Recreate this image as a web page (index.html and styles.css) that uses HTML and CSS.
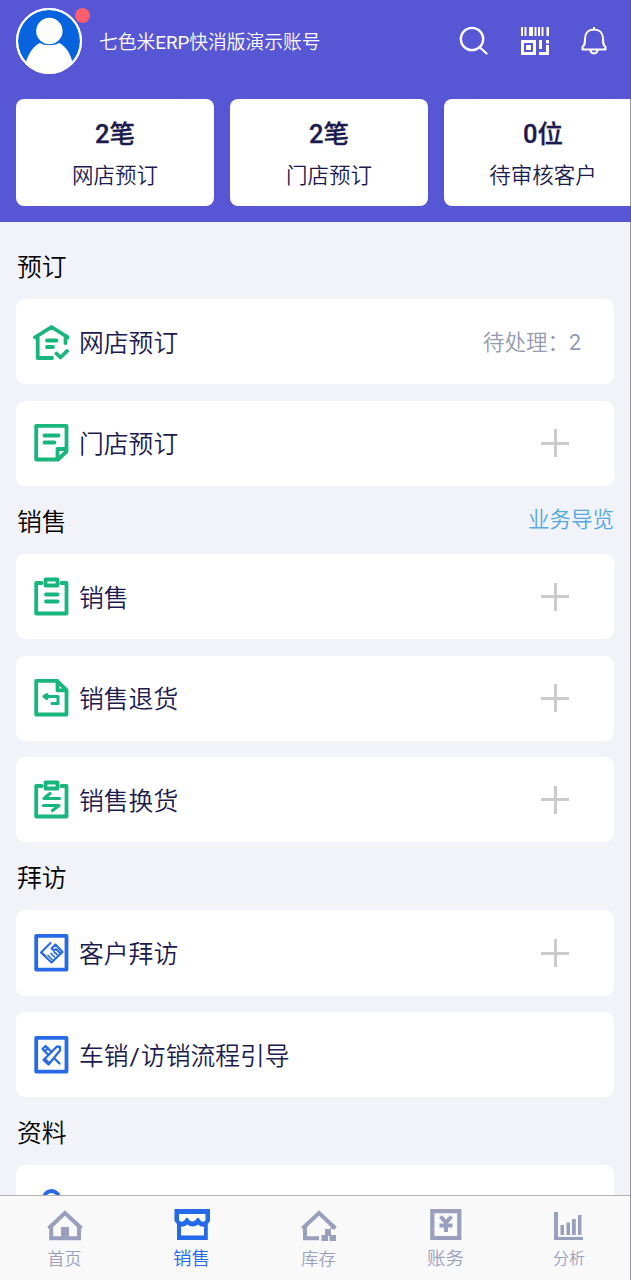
FILE: index.html
```html
<!DOCTYPE html>
<html lang="zh-CN">
<head>
<meta charset="utf-8">
<title>七色米ERP</title>
<link rel="stylesheet" href="styles.css">
</head>
<body>
<div class="app">
  <header class="header">
    <div class="topbar">
      <div class="avatar">
        <svg width="66" height="66" viewBox="0 0 66 66">
          <defs><clipPath id="face"><circle cx="33" cy="33" r="32"/></clipPath></defs>
          <circle cx="33" cy="33" r="33" fill="#fff"/>
          <circle cx="33" cy="33" r="31" fill="#0864de"/>
          <g clip-path="url(#face)" fill="#fff">
            <circle cx="33.4" cy="23" r="13.2"/>
            <path d="M9 57C12 46 17 38 24 35C29 38 38 38 43 35C50 38 55 46 57 57L50 67H16Z"/>
          </g>
          <circle cx="33" cy="33" r="32" fill="none" stroke="#fff" stroke-width="2"/>
        </svg>
        <span class="dot"></span>
      </div>
      <h1 class="account">七色米<span class="latin">ERP</span>快消版演示账号</h1>
      <div class="tools">
        <svg width="30" height="30" viewBox="0 0 30 30" fill="none" stroke="#fff" stroke-width="2.3" stroke-linecap="round"><circle cx="13" cy="13" r="11.2"/><path d="M21 21.5L27.5 27.5"/></svg>
        <svg width="30" height="30" viewBox="0 0 30 30" fill="#fff"><path d="M1 1h2v9H1zM4.500 1h2v9h-2zM9 1h4v9H9zM14.500 1h2v9h-2zM18 1h2v9h-2zM21.500 1h2v9h-2zM26.500 1h2.500v9h-2.500z"/><path fill-rule="evenodd" d="M1 14h15v15H1zM4 17v9h9v-9zM6 19h5v5H6z"/><path d="M19 14h3v9h-3zM26 14h3v3.500h-3zM26 19h3v10H19v-3h7z"/></svg>
        <svg width="30" height="30" viewBox="0 0 30 30" fill="none" stroke="#fff" stroke-width="2" stroke-linejoin="round"><path d="M3.500 23.500V21C6 19 6 17 6 12.500C6 7 9.500 3.500 15 3.500S24 7 24 12.500C24 17 24 19 26.500 21v2.500z"/><path d="M15 1v2.500M11.500 24c0 4.500 7 4.500 7 0"/></svg>
      </div>
    </div>
    <div class="stats">
      <div class="stat"><b>2笔</b><span>网店预订</span></div>
      <div class="stat"><b>2笔</b><span>门店预订</span></div>
      <div class="stat"><b>0位</b><span>待审核客户</span></div>
    </div>
  </header>

  <main class="content">
    <div class="heading"><h2>预订</h2></div>
    <div class="list">
      <div class="row">
        <svg class="icon green" viewBox="0 0 36 40"><path d="M2 15.300L18.500 5L35 15.300M4.700 15V36H19M32.500 15V21M14 18.500H23.500M14 25H20M23.500 31.500L27.500 35.500L34 29"/></svg>
        <span class="name">网店预订</span><span class="pending">待处理：<span class="latin">2</span></span>
      </div>
      <div class="row">
        <svg class="icon green" viewBox="0 0 36 40"><path d="M33.500 26V2.800H3.200V36.500H25L33.500 28.500V26H24.500V36M11.500 12.500H25.500M11.500 19.500H21.500"/></svg>
        <span class="name">门店预订</span><i class="plus"></i>
      </div>
    </div>
    <div class="heading"><h2>销售</h2><a class="guide">业务导览</a></div>
    <div class="list">
      <div class="row">
        <svg class="icon green" viewBox="0 0 36 40"><path d="M8.500 6H3.200V36.500H33.500V6H28.500M12.500 2.500H24.500V8.500H12.500ZM13 17.500H24.500M13 24.500H24.500"/></svg>
        <span class="name">销售</span><i class="plus"></i>
      </div>
      <div class="row">
        <svg class="icon green" viewBox="0 0 36 40"><path d="M24 2.800H3.200V36.500H33.500V12L24 2.800ZM24.500 3V12.300H33"/><path d="M13 18.500H25V25.500H19M14 16.500L11 18.500L14 20.500Z" stroke-width="3"/></svg>
        <span class="name">销售退货</span><i class="plus"></i>
      </div>
      <div class="row">
        <svg class="icon green" viewBox="0 0 36 40"><path d="M8.500 6H3.200V36.500H33.500V6H28.500M12.500 2.500H24.500V8.500H12.500Z"/><path d="M17 13.500L11 18.500H26.500M10.500 25.500H26L19.500 30.500" stroke-width="3.200"/></svg>
        <span class="name">销售换货</span><i class="plus"></i>
      </div>
    </div>
    <div class="heading"><h2>拜访</h2></div>
    <div class="list">
      <div class="row">
        <svg class="icon blue" viewBox="0 0 36 40"><rect x="3.200" y="2.800" width="30.300" height="33.800"/><g stroke-width="2.100"><path d="M17.500 10L8 19.500L18.500 29.500L29.500 19L22.500 11.500L18.500 15.500L21 17.500L23 16L27 20"/><path d="M9 20L12.500 23M15 22.500L19 26.500M18 20.500L21.500 24M21 19L24 21.500" stroke-width="1.700"/></g></svg>
        <span class="name">客户拜访</span><i class="plus"></i>
      </div>
      <div class="row">
        <svg class="icon blue" viewBox="0 0 36 40"><rect x="3.200" y="2.800" width="30.300" height="33.800"/><g stroke-width="2.300"><path d="M24 11.500L10.500 25L15.500 29.500L27 15.500V12ZM12 24L16.500 28.500M18 16.500L12.500 11L9.500 14L15 19.500M12 16L15 13M22 24L26.500 28.500"/></g></svg>
        <span class="name">车销<span class="slash">/</span>访销流程引导</span>
      </div>
    </div>
    <div class="heading"><h2>资料</h2></div>
    <div class="list">
      <div class="row">
        <svg class="icon blue" viewBox="0 0 36 40"><circle cx="18.500" cy="10.500" r="7.500"/><path d="M4 36C4 26 10 22 18 22S33 26 33 36Z"/></svg>
      </div>
    </div>
  </main>

  <nav class="tabs">
    <a class="tab">
      <svg viewBox="0 0 40 36" fill="none" stroke="currentColor" stroke-width="4"><path d="M3.500 22.500L20 7L36.500 22.500M6.200 20V32.200H34V20"/><path d="M16 21h8v11h-8z" fill="currentColor" stroke="none"/></svg>
      <span>首页</span>
    </a>
    <a class="tab active">
      <svg viewBox="0 0 40 36" fill="currentColor"><path fill-rule="evenodd" d="M2.500 3H38V15L35.800 18V34H5V18L2.500 15ZM7 8V14C8 16.500 12 16.500 14 12H16C17.500 16.500 23 16.500 25 12H27C28.500 16.500 32.500 16.500 33.500 14V8ZM9 20.500V29.500H32V20.500C29.500 21 27.500 20 26 18.500C23.500 21 18 21 15.500 18.500C13.500 20 11.500 21 9 20.500Z"/></svg>
      <span class="t-sales">销售</span>
    </a>
    <a class="tab">
      <svg viewBox="0 0 40 36" fill="none" stroke="currentColor" stroke-width="4"><path d="M3.500 22.500L20 7L36.500 22.500M6 20V32.200H20M33.500 18V23"/><path d="M26 23h6v6h5v6h-6.500v-5h-1.500v5h-6.500v-6H26z" fill="currentColor" stroke="none"/></svg>
      <span class="t-stock">库存</span>
    </a>
    <a class="tab">
      <svg viewBox="0 0 40 36" fill="none" stroke="currentColor" stroke-width="4"><path d="M6.300 5.200H33.300V32H6.300Z" stroke-width="4.200"/><path d="M14.500 10.500L20 16.500L25.500 10.500M13.500 19.500H26.500M20 16V26" stroke-width="4"/></svg>
      <span class="t-money">账务</span>
    </a>
    <a class="tab">
      <svg viewBox="0 0 40 36" fill="currentColor"><path d="M5 6h4v25h25v3H5zM11.500 19h3.500v10h-3.500zM17.500 16.500h3.500V29h-3.500zM23 13h3.800v16H23zM29 9h3.500v20H29z"/></svg>
      <span class="t-stats">分析</span>
    </a>
  </nav>
  <div class="edge"></div>
</div>
</body>
</html>
```
FILE: styles.css
```css
* { box-sizing: border-box; }

body {
  margin: 0;
  font-family: Roboto, "Noto Sans CJK SC", sans-serif;
  font-weight: 350;
  color: #1c1b50;
}

.app {
  position: relative;
  display: flex;
  flex-direction: column;
  height: 1280px;
  overflow: hidden;
  background: #f2f3f8;
}

svg { display: block; flex: none; }

.header {
  flex: none;
  height: 222.300px;
  padding: 8px 0 0 16px;
  background: #5756d5;
  overflow: hidden;
}

.topbar { display: flex; align-items: center; height: 66px; }
.avatar { position: relative; }

.dot {
  position: absolute;
  top: 0;
  right: -8px;
  width: 15px;
  height: 15px;
  border-radius: 50%;
  background: #fb5f6d;
}

.account {
  margin: 0 0 1px 17px;
  font-size: 18.750px;
  font-weight: 350;
  white-space: nowrap;
  color: #fff;
}

.latin { font-weight: 400; }
.slash { padding: 0 1px; font-weight: 400; }

.tools { display: flex; gap: 30px; margin: 0 22px 0 auto; }
.tools svg:nth-child(2) { margin-right: -1px; margin-left: 1px; }

.stats { display: flex; gap: 16px; margin-top: 25px; }

.stat {
  display: flex;
  flex: none;
  flex-direction: column;
  align-items: center;
  width: 198px;
  height: 107px;
  padding-top: 16px;
  border-radius: 8px;
  background: #fff;
}

.stat b { font-size: 25.500px; font-weight: 500; line-height: 38px; -webkit-text-stroke: 0.300px currentColor; }
.stat span { font-size: 21.500px; line-height: 32px; margin-top: 7px; }

.content {
  flex: 1;
  min-height: 0;
  overflow: hidden;
  padding: 9px 17px 0 16px;
}

.heading {
  display: flex;
  align-items: center;
  justify-content: space-between;
  height: 68px;
}

.heading h2 { margin: 0 0 1px 1px; font-size: 24.800px; font-weight: 350; color: #000; }
.guide { margin-bottom: 5px; font-size: 21.500px; color: #53a8e2; }

.list { display: flex; flex-direction: column; gap: 16.400px; }

.row {
  display: flex;
  align-items: center;
  height: 85.200px;
  padding: 0 33px 0 17px;
  border-radius: 9px;
  background: #fff;
}

.icon {
  width: 36px;
  height: 40px;
  fill: none;
  stroke-width: 3.800;
  stroke-linecap: round;
  stroke-linejoin: round;
}

.green { stroke: #18b57d; }
.blue { stroke: #2869e6; }

.name { margin: 0 0 2px 10px; font-size: 24.800px; white-space: nowrap; }
.pending { margin: 0 0 2px auto; font-size: 21.500px; color: #9699af; }

.plus {
  width: 28px;
  height: 28px;
  margin: 0 12px 0 auto;
  background:
    linear-gradient(#cbcbcb, #cbcbcb) center / 28px 3px no-repeat,
    linear-gradient(#cbcbcb, #cbcbcb) center / 3px 28px no-repeat;
}

.tabs {
  flex: none;
  display: grid;
  grid-template-columns: 127px 127px 127px 127px 120px;
  height: 85px;
  padding-left: 1px;
  border-top: 1px solid #b3b3b9;
  background: #f9f9fa;
}

.tab {
  display: flex;
  flex-direction: column;
  align-items: center;
  padding-top: 10px;
  color: #9a9fbd;
}

.tab svg { width: 40px; height: 36px; }
.tab span { font-size: 17px; line-height: 24px; margin-top: 5px; }
.tab .t-sales { font-size: 18.500px; }
.tab .t-stock { font-size: 17.500px; }
.tab .t-money { font-size: 18.500px; }
.tab .t-stats { font-size: 16px; }
.tab.active { color: #2369e8; }

.edge {
  position: absolute;
  top: 0;
  right: 0;
  bottom: 0;
  width: 1px;
  background: rgba(90, 90, 105, 0.6);
}
```
